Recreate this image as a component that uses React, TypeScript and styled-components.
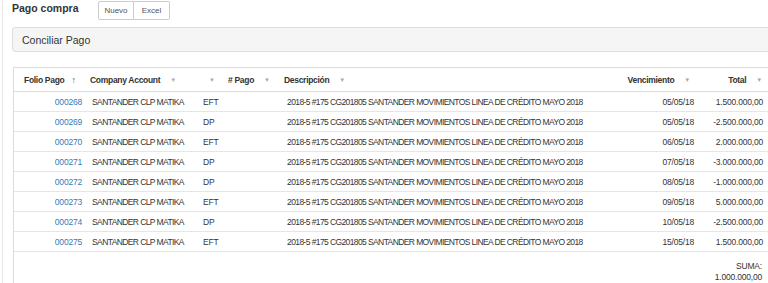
import React from "react";
import styled, { createGlobalStyle } from "styled-components";

const GlobalStyle = createGlobalStyle`
  html, body {
    margin: 0;
    padding: 0;
    background: #fff;
    overflow: hidden;
  }
  body {
    font-family: "Liberation Sans", Arial, sans-serif;
    color: #333;
  }
`;

const Page = styled.div`
  margin-left: 2px;
  border-left: 1px solid #e6e6e6;
  padding: 0 0 0 9px;
  min-height: 283px;
  width: 790px;
`;

const TopBar = styled.div`
  display: flex;
  align-items: flex-start;
  height: 27px;
`;

const Title = styled.h1`
  margin: 2px 0 0 0;
  width: 86px;
  font-size: 10.5px;
  font-weight: 700;
  color: #333;
`;

const ButtonGroup = styled.div`
  display: flex;
  margin-top: 1px;
`;

const Button = styled.button<{ $first?: boolean }>`
  height: 19px;
  width: 36px;
  padding: 0;
  font-family: inherit;
  font-size: 8px;
  color: #555;
  background: #fff;
  border: 1px solid #ccc;
  border-left-width: ${(p) => (p.$first ? "1px" : "0")};
  border-radius: ${(p) => (p.$first ? "2px 0 0 2px" : "0 2px 2px 0")};
`;

const Panel = styled.div`
  height: 23px;
  display: flex;
  align-items: center;
  padding-left: 9px;
  background: #f5f5f5;
  border: 1px solid #dedede;
  border-radius: 3px;
  font-size: 10.5px;
  color: #333;
`;

const TableBox = styled.div`
  margin: 15px 0 0 1px;
  border-top: 1px solid #dcdcdc;
  border-left: 1px solid #dcdcdc;
  border-bottom: 1px solid #dcdcdc;
`;

const Table = styled.table`
  border-collapse: collapse;
  table-layout: fixed;
  width: 756px;
  font-size: 8.5px;
`;

const Th = styled.th<{ $align?: string; $pl?: number; $pr?: number }>`
  height: 23px;
  padding: 0 ${(p) => p.$pr ?? 4}px 0 ${(p) => p.$pl ?? 4}px;
  text-align: ${(p) => p.$align || "left"};
  font-size: 8.5px;
  font-weight: 700;
  letter-spacing: -0.3px;
  color: #333;
  border-bottom: 1px solid #dcdcdc;
  white-space: nowrap;
`;

const SortIcon = styled.span<{ $active?: boolean }>`
  display: inline-block;
  margin-left: ${(p) => (p.$active ? "7px" : "10px")};
  color: ${(p) => (p.$active ? "#555" : "#aaa")};
  font-size: ${(p) => (p.$active ? "9px" : "6px")};
  font-weight: 400;
  vertical-align: ${(p) => (p.$active ? "baseline" : "middle")};
`;

const Td = styled.td<{ $align?: string; $pl?: number; $pr?: number; $tight?: boolean }>`
  height: 19px;
  padding: 0 ${(p) => p.$pr ?? 4}px 0 ${(p) => p.$pl ?? 4}px;
  text-align: ${(p) => p.$align || "left"};
  letter-spacing: ${(p) => (p.$tight ? "-0.6px" : "-0.2px")};
  border-top: 1px solid #e6e6e6;
  white-space: nowrap;
  overflow: hidden;
`;

const Folio = styled.a`
  color: #337ab7;
  text-decoration: none;
`;

const FootCell = styled.td`
  height: 22px;
  padding: 9px 8px 0 0;
  text-align: right;
  vertical-align: top;
  border-top: 1px solid #e6e6e6;
  line-height: 11px;
  letter-spacing: -0.2px;
`;

type Row = {
  folio: string;
  tipo: string;
  fecha: string;
  total: string;
};

const rows: Row[] = [
  { folio: "000268", tipo: "EFT", fecha: "05/05/18", total: "1.500.000,00" },
  { folio: "000269", tipo: "DP", fecha: "05/05/18", total: "-2.500.000,00" },
  { folio: "000270", tipo: "EFT", fecha: "06/05/18", total: "2.000.000,00" },
  { folio: "000271", tipo: "DP", fecha: "07/05/18", total: "-3.000.000,00" },
  { folio: "000272", tipo: "DP", fecha: "08/05/18", total: "-1.000.000,00" },
  { folio: "000273", tipo: "EFT", fecha: "09/05/18", total: "5.000.000,00" },
  { folio: "000274", tipo: "DP", fecha: "10/05/18", total: "-2.500.000,00" },
  { folio: "000275", tipo: "EFT", fecha: "15/05/18", total: "1.500.000,00" },
];

const desc = "2018-5 #175 CG201805 SANTANDER MOVIMIENTOS LINEA DE CRÉDITO MAYO 2018";

const App = () => {
  return (
    <>
      <GlobalStyle />
      <Page>
        <TopBar>
          <Title>Pago compra</Title>
          <ButtonGroup>
            <Button $first>Nuevo</Button>
            <Button>Excel</Button>
          </ButtonGroup>
        </TopBar>
        <Panel>Conciliar Pago</Panel>
        <TableBox>
          <Table>
            <colgroup>
              <col style={{ width: 74 }} />
              <col style={{ width: 110 }} />
              <col style={{ width: 24 }} />
              <col style={{ width: 60 }} />
              <col style={{ width: 328 }} />
              <col style={{ width: 90 }} />
              <col style={{ width: 70 }} />
            </colgroup>
            <thead>
              <tr>
                <Th $pl={10}>
                  Folio Pago<SortIcon $active>↑</SortIcon>
                </Th>
                <Th $pl={2}>
                  Company Account<SortIcon>▼</SortIcon>
                </Th>
                <Th $pl={1}>
                  <SortIcon>▼</SortIcon>
                </Th>
                <Th $pl={6}>
                  # Pago<SortIcon>▼</SortIcon>
                </Th>
                <Th $pl={2}>
                  Descripción<SortIcon>▼</SortIcon>
                </Th>
                <Th $align="right" $pr={10}>
                  Vencimiento<SortIcon>▼</SortIcon>
                </Th>
                <Th $align="right" $pr={8}>
                  Total<SortIcon>▼</SortIcon>
                </Th>
              </tr>
            </thead>
            <tbody>
              {rows.map((r) => (
                <tr key={r.folio}>
                  <Td $align="right" $pr={6}>
                    <Folio href="#">{r.folio}</Folio>
                  </Td>
                  <Td $pl={4} $tight>
                    SANTANDER CLP MATIKA
                  </Td>
                  <Td $pl={5}>{r.tipo}</Td>
                  <Td />
                  <Td $pl={5} $tight>
                    {desc}
                  </Td>
                  <Td $align="right" $pr={6}>
                    {r.fecha}
                  </Td>
                  <Td $align="right" $pr={7}>
                    {r.total}
                  </Td>
                </tr>
              ))}
            </tbody>
            <tfoot>
              <tr>
                <FootCell colSpan={7}>
                  SUMA:
                  <br />
                  1.000.000,00
                </FootCell>
              </tr>
            </tfoot>
          </Table>
        </TableBox>
      </Page>
    </>
  );
};

export default App;
